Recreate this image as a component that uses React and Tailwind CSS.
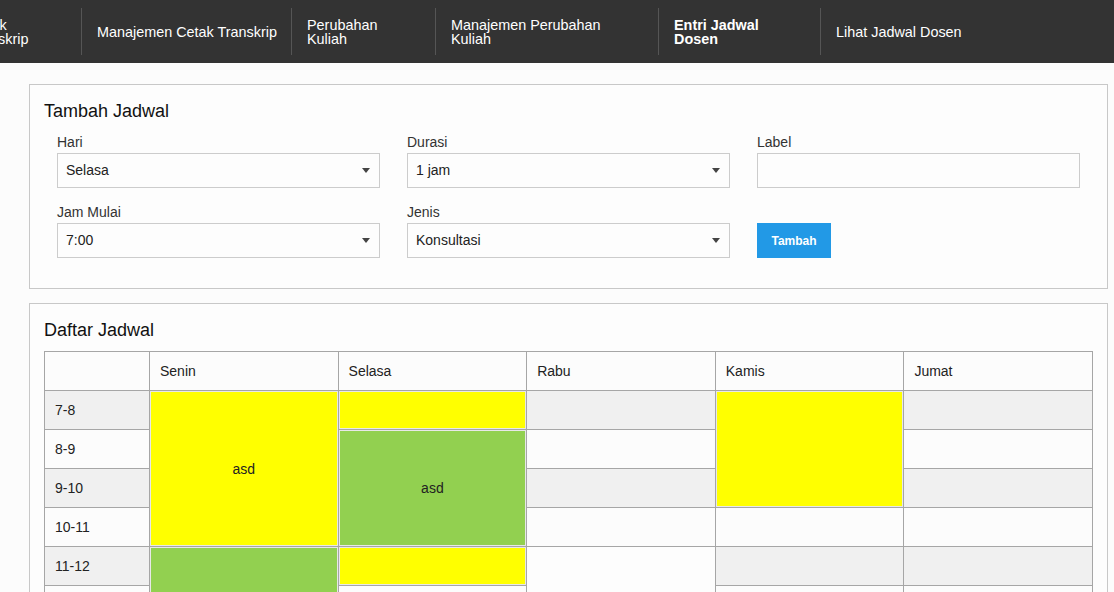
import React from 'react';

const navItems = [
  { label: ['Cetak', 'Transkrip'], width: 'w-[128px] -ml-[46px]' },
  { label: ['Manajemen Cetak Transkrip'], width: 'w-[210px]' },
  { label: ['Perubahan', 'Kuliah'], width: 'w-[144px]' },
  { label: ['Manajemen Perubahan', 'Kuliah'], width: 'w-[223px]' },
  { label: ['Entri Jadwal', 'Dosen'], width: 'w-[162px]', active: true },
  { label: ['Lihat Jadwal Dosen'], width: 'w-[200px]', last: true }
];

const days = ['Senin', 'Selasa', 'Rabu', 'Kamis', 'Jumat'];

// null = covered by a rowspan from above
const Y = 'bg-[#ffff00] shadow-[inset_0_0_0_1px_#e8e8e8]';
const G = 'bg-[#92d050] shadow-[inset_0_0_0_1px_#e8e8e8]';

const rows = [
  { time: '7-8', cells: [{ cls: Y, span: 4, text: 'asd' }, { cls: Y }, {}, { cls: Y, span: 3 }, {}] },
  { time: '8-9', cells: [null, { cls: G, span: 3, text: 'asd' }, {}, null, {}] },
  { time: '9-10', cells: [null, null, {}, null, {}] },
  { time: '10-11', cells: [null, null, {}, {}, {}] },
  { time: '11-12', cells: [{ cls: G, span: 3 }, { cls: Y }, { cls: 'bg-[#fdfdfd]', span: 2 }, {}, {}] },
  { time: '12-13', cells: [null, {}, null, {}, {}] },
  { time: '13-14', cells: [null, {}, {}, {}, {}] }
];

const Select = ({ value }) => (
  <div className="flex h-[35px] items-center justify-between border border-[#cccccc] bg-[#fdfdfd] pl-[8px] pr-[9px] text-[14px] text-[#222]">
    <span>{value}</span>
    <span className="h-0 w-0 border-x-[4px] border-t-[5px] border-x-transparent border-t-[#444]" />
  </div>
);

const Field = ({ label, children }) => (
  <div className="flex flex-col">
    <label className="mb-px h-[20px] text-[14px] leading-[20px] text-[#333]">{label}</label>
    {children}
  </div>
);

export default function App() {
  return (
    <div className="h-[592px] overflow-hidden bg-[#fcfcfc] font-['Liberation_Sans',Arial,sans-serif] text-[#222]">
      <nav className="flex h-[63px] items-stretch overflow-hidden bg-[#333333]">
        {navItems.map((item, i) => (
          <div
            key={i}
            className={`my-[8px] flex shrink-0 items-center px-[15px] text-[14.4px] leading-[14px] text-white ${item.width} ${
              item.last ? '' : 'border-r border-[#555555]'
            } ${item.active ? 'font-bold' : ''}`}
          >
            <span className="whitespace-nowrap">
              {item.label.map((l, j) => (
                <span key={j} className="block">
                  {l}
                </span>
              ))}
            </span>
          </div>
        ))}
      </nav>

      <div className="ml-[29px] mr-[6px] mt-[21px] flex flex-col gap-[14px]">
        <section className="border border-[#c8c8c8] bg-[#fdfdfd] px-[14px] pb-[30px] pt-[15px]">
          <h2 className="mb-[10px] text-[18px] leading-[22px] text-[#111]">Tambah Jadwal</h2>
          <div className="grid grid-cols-3 gap-x-[27px] gap-y-[14px] px-[13px]">
            <Field label="Hari">
              <Select value="Selasa" />
            </Field>
            <Field label="Durasi">
              <Select value="1 jam" />
            </Field>
            <Field label="Label">
              <input className="h-[35px] border border-[#cccccc] bg-[#fdfdfd] px-2 text-[14px] outline-none" />
            </Field>
            <Field label="Jam Mulai">
              <Select value="7:00" />
            </Field>
            <Field label="Jenis">
              <Select value="Konsultasi" />
            </Field>
            <div className="flex flex-col pt-[21px]">
              <button
                type="button"
                className="h-[35px] w-[74px] bg-[#2299e6] text-[12px] font-bold text-white"
              >
                Tambah
              </button>
            </div>
          </div>
        </section>

        <section className="border border-[#c8c8c8] bg-[#fdfdfd] px-[14px] pb-[15px] pt-[15px]">
          <h2 className="mb-[10px] text-[18px] leading-[22px] text-[#111]">Daftar Jadwal</h2>
          <table className="w-full table-fixed border-collapse text-[14px] leading-[20px] text-[#222]">
            <colgroup>
              <col className="w-[105px]" />
              {days.map((d) => (
                <col key={d} />
              ))}
            </colgroup>
            <thead>
              <tr className="bg-[#fcfcfc]">
                <th className="border border-[#a6a6a6] py-[9px]" />
                {days.map((d) => (
                  <th key={d} className="border border-[#a6a6a6] px-[10px] py-[9px] text-left font-normal">
                    {d}
                  </th>
                ))}
              </tr>
            </thead>
            <tbody>
              {rows.map((row, r) => (
                <tr key={row.time} className={r % 2 === 0 ? 'bg-[#f0f0f0]' : 'bg-[#fcfcfc]'}>
                  <td className="border border-[#a6a6a6] px-[10px] py-[9px]">{row.time}</td>
                  {row.cells.map((c, k) =>
                    c === null ? null : (
                      <td
                        key={k}
                        rowSpan={c.span || 1}
                        className={`border border-[#a6a6a6] py-[9px] text-center align-middle ${c.cls || ''}`}
                      >
                        {c.text || ''}
                      </td>
                    )
                  )}
                </tr>
              ))}
            </tbody>
          </table>
        </section>
      </div>
    </div>
  );
}
